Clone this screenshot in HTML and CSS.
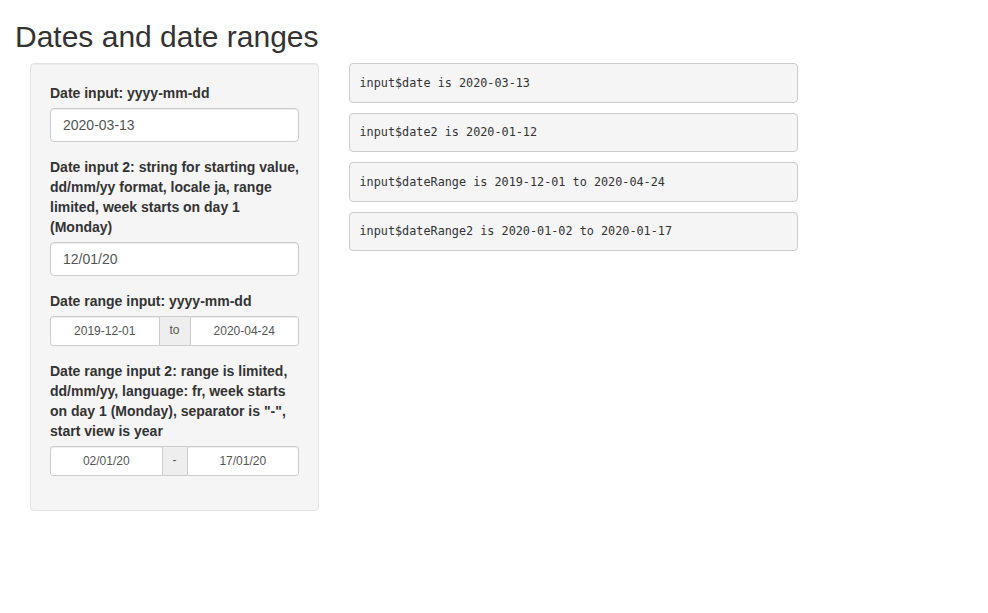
FILE: index.html
```html
<!DOCTYPE html>
<html>
<head>
<meta charset="utf-8">
<title>Dates and date ranges</title>
<link rel="stylesheet" href="styles.css">
</head>
<body>
<div class="page">
  <h2 class="title">Dates and date ranges</h2>
  <div class="layout">
    <div class="well">
      <div class="form-group">
        <label class="label">Date input: yyyy-mm-dd</label>
        <input class="form-control" type="text" value="2020-03-13">
      </div>
      <div class="form-group">
        <label class="label">Date input 2: string for starting value, dd/mm/yy format, locale ja, range limited, week starts on day 1 (Monday)</label>
        <input class="form-control" type="text" value="12/01/20">
      </div>
      <div class="form-group">
        <label class="label">Date range input: yyyy-mm-dd</label>
        <div class="daterange">
          <input class="range-input range-start" type="text" value="2019-12-01">
          <span class="addon">to</span>
          <input class="range-input range-end" type="text" value="2020-04-24">
        </div>
      </div>
      <div class="form-group">
        <label class="label">Date range input 2: range is limited, dd/mm/yy, language: fr, week starts on day 1 (Monday), separator is "-", start view is year</label>
        <div class="daterange">
          <input class="range-input range-start" type="text" value="02/01/20">
          <span class="addon">-</span>
          <input class="range-input range-end" type="text" value="17/01/20">
        </div>
      </div>
    </div>
    <div class="main">
      <pre class="output">input$date is 2020-03-13</pre>
      <pre class="output">input$date2 is 2020-01-12</pre>
      <pre class="output">input$dateRange is 2019-12-01 to 2020-04-24</pre>
      <pre class="output">input$dateRange2 is 2020-01-02 to 2020-01-17</pre>
    </div>
  </div>
</div>
</body>
</html>
```

FILE: styles.css
```css
* { box-sizing: border-box; }

html, body {
  margin: 0;
  padding: 0;
  background: #fff;
}

body {
  font-family: "Liberation Sans", Arial, sans-serif;
  font-size: 14px;
  line-height: 1.42857143;
  color: #333;
}

.page {
  padding: 0 15px;
}

.title {
  margin: 20px 0 10px;
  font-size: 30px;
  font-weight: 500;
  line-height: 1.1;
  color: #333;
}

.layout {
  display: flex;
  align-items: flex-start;
  padding-left: 15px;
}

.well {
  width: 289px;
  flex: none;
  padding: 19px;
  background: #f5f5f5;
  border: 1px solid #e3e3e3;
  border-radius: 4px;
  box-shadow: inset 0 1px 1px rgba(0,0,0,0.05);
}

.form-group {
  margin-bottom: 15px;
}

.label {
  display: block;
  margin-bottom: 5px;
  font-weight: bold;
  line-height: 20px;
}

.form-control {
  display: block;
  width: 100%;
  height: 34px;
  padding: 6px 12px;
  font-family: inherit;
  font-size: 14px;
  line-height: 1.42857143;
  color: #555;
  background: #fff;
  border: 1px solid #ccc;
  border-radius: 4px;
  box-shadow: inset 0 1px 1px rgba(0,0,0,0.075);
  outline: none;
}

.daterange {
  display: flex;
  width: 100%;
  height: 30px;
}

.range-input {
  flex: 1 1 0;
  min-width: 0;
  height: 30px;
  padding: 5px 10px;
  font-family: inherit;
  font-size: 12px;
  line-height: 1.5;
  color: #555;
  text-align: center;
  background: #fff;
  border: 1px solid #ccc;
  box-shadow: inset 0 1px 1px rgba(0,0,0,0.075);
  outline: none;
}

.range-start {
  border-radius: 3px 0 0 3px;
}

.range-end {
  border-radius: 0 3px 3px 0;
}

.addon {
  flex: none;
  display: flex;
  align-items: center;
  justify-content: center;
  padding: 0 10px;
  font-size: 12px;
  color: #555;
  background: #eee;
  border-top: 1px solid #ccc;
  border-bottom: 1px solid #ccc;
}

.main {
  width: 449px;
  margin-left: 30px;
  flex: none;
}

.output {
  margin: 0 0 10px;
  padding: 9.5px;
  font-family: "DejaVu Sans Mono", "Liberation Mono", monospace;
  font-size: 11.8px;
  line-height: 18.57px;
  color: #333;
  background: #f5f5f5;
  border: 1px solid #ccc;
  border-radius: 4px;
  white-space: pre-wrap;
  word-break: break-all;
}
```
